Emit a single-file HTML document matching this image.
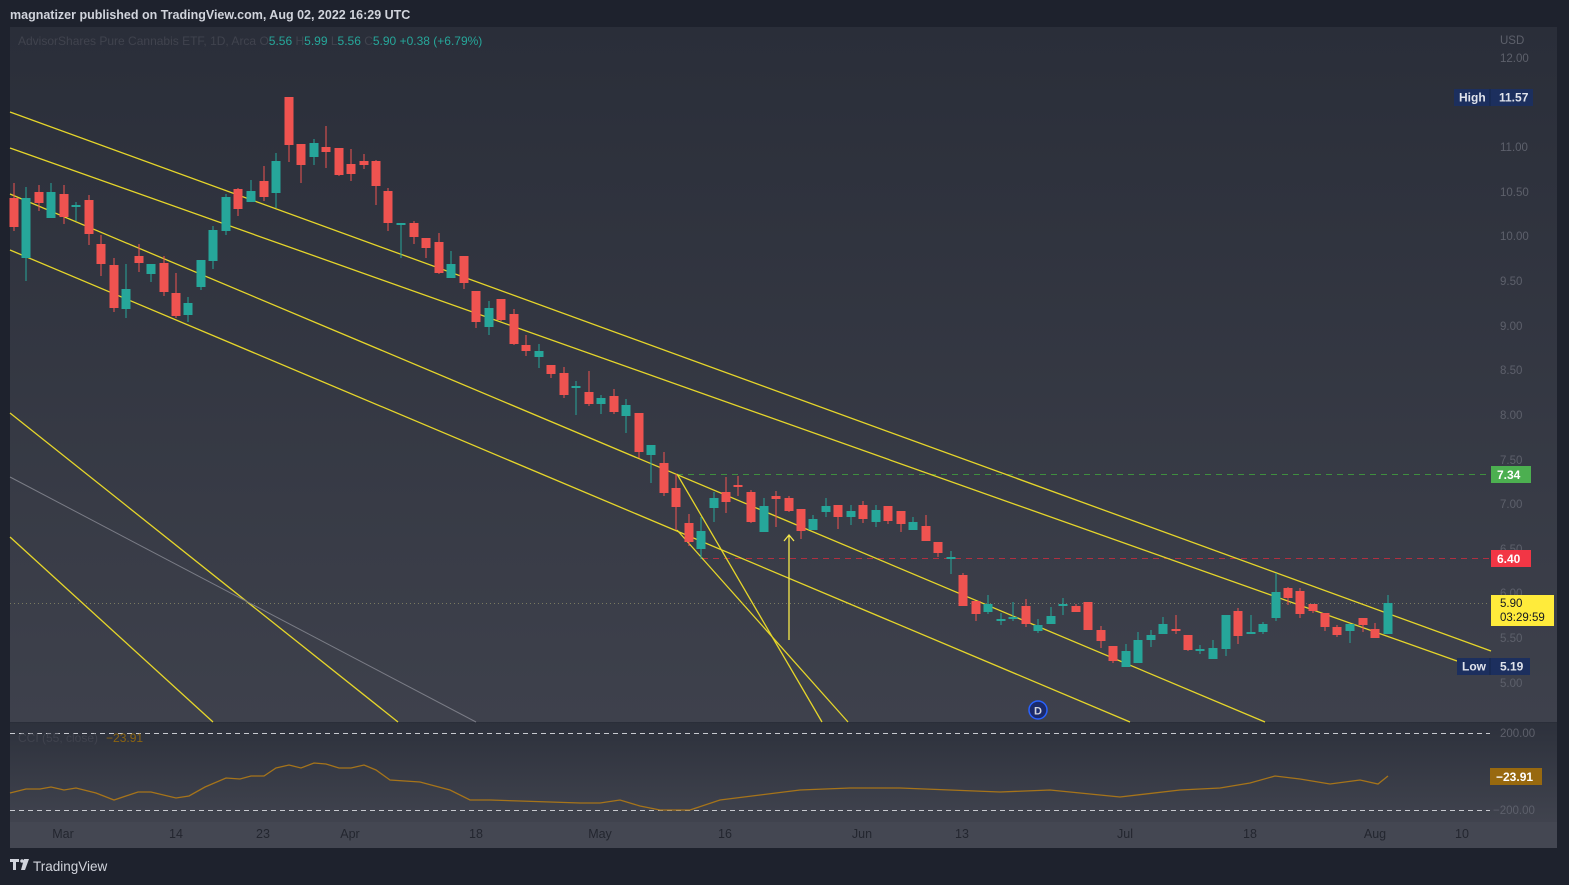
<!DOCTYPE html>
<html><head><meta charset="utf-8"><style>
html,body{margin:0;padding:0;background:#1e222d;width:1569px;height:885px;overflow:hidden}
svg{display:block}
text{font-family:"Liberation Sans",sans-serif}
</style></head><body>
<svg width="1569" height="885" viewBox="0 0 1569 885" xmlns="http://www.w3.org/2000/svg">
<defs>
<linearGradient id="gm" x1="0" y1="0" x2="0" y2="1"><stop offset="0" stop-color="#2a2e39"/><stop offset="1" stop-color="#3e414c"/></linearGradient>
<linearGradient id="gc" x1="0" y1="0" x2="0" y2="1"><stop offset="0" stop-color="#2d313c"/><stop offset="1" stop-color="#40434e"/></linearGradient>
</defs>
<rect width="1569" height="885" fill="#1e222d"/>
<text x="10" y="19" font-size="12.5" font-weight="bold" fill="#d1d4dc">magnatizer published on TradingView.com, Aug 02, 2022 16:29 UTC</text>
<rect x="10" y="27" width="1547" height="695" fill="url(#gm)"/>
<rect x="10" y="722" width="1547" height="100" fill="url(#gc)"/>
<rect x="10" y="822" width="1547" height="26" fill="#444752"/>
<line x1="10" y1="722.5" x2="1557" y2="722.5" stroke="#2a2e39"/>
<text font-size="12" fill="#40434e"><tspan x="18" y="45">AdvisorShares Pure Cannabis ETF, 1D, Arca  O</tspan><tspan fill="#26a69a">5.56</tspan><tspan>  H</tspan><tspan fill="#26a69a">5.99</tspan><tspan>  L</tspan><tspan fill="#26a69a">5.56</tspan><tspan>  C</tspan><tspan fill="#26a69a">5.90  +0.38 (+6.79%)</tspan></text>
<g font-size="11.5" fill="#5d606b">
<text x="1500" y="44">USD</text><text x="1500" y="62">12.00</text><text x="1500" y="151">11.00</text><text x="1500" y="196">10.50</text><text x="1500" y="240">10.00</text><text x="1500" y="285">9.50</text><text x="1500" y="330">9.00</text><text x="1500" y="374">8.50</text><text x="1500" y="419">8.00</text><text x="1500" y="464">7.50</text><text x="1500" y="508">7.00</text><text x="1500" y="553">6.50</text><text x="1500" y="597">6.00</text><text x="1500" y="642">5.50</text><text x="1500" y="687">5.00</text>
<text x="1500" y="737">200.00</text><text x="1493" y="814">−200.00</text>
</g>
<g font-size="12.5" fill="#23262f" text-anchor="middle">
<text x="63" y="838">Mar</text><text x="176" y="838">14</text><text x="263" y="838">23</text><text x="350" y="838">Apr</text><text x="476" y="838">18</text><text x="600" y="838">May</text><text x="725" y="838">16</text><text x="862" y="838">Jun</text><text x="962" y="838">13</text><text x="1125" y="838">Jul</text><text x="1250" y="838">18</text><text x="1375" y="838">Aug</text><text x="1462" y="838">10</text>
</g>
<line x1="677" y1="474.5" x2="1490" y2="474.5" stroke="#3f8e3f" stroke-dasharray="6 5"/>
<line x1="702" y1="558.5" x2="1490" y2="558.5" stroke="#b03040" stroke-dasharray="6 5"/>
<line x1="10" y1="603.5" x2="1490" y2="603.5" stroke="#7a7a60" stroke-dasharray="1 3"/>
<g stroke="#e6d62a" stroke-width="1.3" fill="none">
<line x1="10" y1="112" x2="1491" y2="651"/>
<line x1="10" y1="148" x2="1457" y2="661"/>
<line x1="10" y1="194" x2="1265" y2="722"/>
<line x1="10" y1="250" x2="1130" y2="722"/>
<line x1="10" y1="413" x2="398" y2="722"/>
<line x1="10" y1="537" x2="213" y2="722"/>
<line x1="677" y1="474" x2="822" y2="722"/>
<line x1="677" y1="530" x2="848" y2="722"/>
<path d="M789 640V535M784 541L789 535L794 541" stroke="#f5e84a"/>
</g>
<line x1="10" y1="477" x2="476" y2="722" stroke="#7a7c86" stroke-width="1"/>
<g fill="#ef5350" stroke="#ef5350" stroke-width="1">
<path d="M14 183V231M39 185V211M64 185V224M89 195V245M101 235V276M114 258V312M139 244V272M164 256V296M176 273V318M238 188V216M264 166V201M289 97V162M301 144V183M326 126V168M339 148V176M351 149V181M364 154V169M376 160V205M388 188V231M414 221V244M426 238V258M439 233V274M464 256V289M476 291V328M501 299V321M514 309V345M526 335V356M551 365V378M564 367V398M589 371V406M614 389V414M639 413V458M664 452V496M676 474V530M689 514V546M726 477V513M738 476V496M751 490V523M776 491V527M789 496V512M801 509V539M838 505V529M863 501V523M888 506V524M901 511V532M926 515V541M938 542V557M963 573V606M976 601V621M1026 599V627M1076 604V612M1088 602V630M1101 626V648M1113 646V663M1176 615V634M1188 635V651M1238 608V644M1288 587V605M1300 588V618M1313 604V613M1325 613V631M1337 625V637M1363 618V632M1375 623V638" fill="none"/>
<g stroke="none">
<rect x="9.5" y="198" width="9" height="29"/><rect x="34.5" y="192" width="9" height="11"/><rect x="59.5" y="194" width="9" height="23"/><rect x="84.5" y="200" width="9" height="34"/><rect x="96.5" y="244" width="9" height="20"/><rect x="109.5" y="265" width="9" height="43"/><rect x="134.5" y="256" width="9" height="7"/><rect x="159.5" y="263" width="9" height="29"/><rect x="171.5" y="293" width="9" height="23"/><rect x="233.5" y="189" width="9" height="20"/><rect x="259.5" y="181" width="9" height="16"/><rect x="284.5" y="97" width="9" height="48"/><rect x="296.5" y="144" width="9" height="21"/><rect x="321.5" y="147" width="9" height="5"/><rect x="334.5" y="148" width="9" height="27"/><rect x="346.5" y="164" width="9" height="10"/><rect x="359.5" y="161" width="9" height="4"/><rect x="371.5" y="161" width="9" height="25"/><rect x="383.5" y="191" width="9" height="32"/><rect x="409.5" y="223" width="9" height="14"/><rect x="421.5" y="238" width="9" height="10"/><rect x="434.5" y="242" width="9" height="31"/><rect x="459.5" y="256" width="9" height="27"/><rect x="471.5" y="291" width="9" height="31"/><rect x="496.5" y="299" width="9" height="21"/><rect x="509.5" y="314" width="9" height="30"/><rect x="521.5" y="345" width="9" height="6"/><rect x="546.5" y="365" width="9" height="9"/><rect x="559.5" y="373" width="9" height="22"/><rect x="584.5" y="392" width="9" height="12"/><rect x="609.5" y="396" width="9" height="16"/><rect x="634.5" y="413" width="9" height="39"/><rect x="659.5" y="463" width="9" height="30"/><rect x="671.5" y="488" width="9" height="19"/><rect x="684.5" y="523" width="9" height="19"/><rect x="721.5" y="492" width="9" height="10"/><rect x="733.5" y="485" width="9" height="2"/><rect x="746.5" y="492" width="9" height="30"/><rect x="771.5" y="496" width="9" height="3"/><rect x="784.5" y="498" width="9" height="13"/><rect x="796.5" y="509" width="9" height="22"/><rect x="833.5" y="505" width="9" height="12"/><rect x="858.5" y="505" width="9" height="14"/><rect x="883.5" y="506" width="9" height="15"/><rect x="896.5" y="511" width="9" height="13"/><rect x="921.5" y="526" width="9" height="15"/><rect x="933.5" y="542" width="9" height="11"/><rect x="958.5" y="575" width="9" height="31"/><rect x="971.5" y="601" width="9" height="13"/><rect x="1021.5" y="606" width="9" height="18"/><rect x="1071.5" y="606" width="9" height="6"/><rect x="1083.5" y="602" width="9" height="28"/><rect x="1096.5" y="630" width="9" height="11"/><rect x="1108.5" y="646" width="9" height="15"/><rect x="1171.5" y="629" width="9" height="2"/><rect x="1183.5" y="635" width="9" height="15"/><rect x="1233.5" y="611" width="9" height="25"/><rect x="1283.5" y="588" width="9" height="10"/><rect x="1295.5" y="591" width="9" height="23"/><rect x="1308.5" y="604" width="9" height="7"/><rect x="1320.5" y="613" width="9" height="14"/><rect x="1332.5" y="627" width="9" height="8"/><rect x="1358.5" y="618" width="9" height="7"/><rect x="1370.5" y="629" width="9" height="9"/>
</g></g>
<g fill="#26a69a" stroke="#26a69a" stroke-width="1">
<path d="M26 187V281M51 183V218M76 202V221M126 264V318M151 264V282M188 297V322M201 260V290M213 226V269M226 194V235M251 180V202M276 153V208M314 139V165M401 223V258M451 251V278M489 301V335M539 344V368M576 381V415M601 395V414M626 399V433M651 445V483M701 517V559M714 492V522M764 498V532M813 515V530M826 498V517M851 505V525M876 505V527M913 517V530M951 551V574M988 595V614M1001 613V625M1013 602V621M1038 619V633M1051 607V624M1063 598V615M1126 644V667M1138 632V663M1151 630V647M1163 617V634M1200 645V654M1213 640V659M1226 615V656M1251 615V634M1263 622V634M1276 573V621M1350 624V643M1388 595V634" fill="none"/>
<g stroke="none">
<rect x="21.5" y="198" width="9" height="60"/><rect x="46.5" y="192" width="9" height="26"/><rect x="71.5" y="205" width="9" height="2"/><rect x="121.5" y="289" width="9" height="20"/><rect x="146.5" y="264" width="9" height="10"/><rect x="183.5" y="303" width="9" height="12"/><rect x="196.5" y="260" width="9" height="27"/><rect x="208.5" y="230" width="9" height="31"/><rect x="221.5" y="197" width="9" height="34"/><rect x="246.5" y="191" width="9" height="11"/><rect x="271.5" y="161" width="9" height="32"/><rect x="309.5" y="143" width="9" height="14"/><rect x="396.5" y="223" width="9" height="2"/><rect x="446.5" y="264" width="9" height="14"/><rect x="484.5" y="308" width="9" height="19"/><rect x="534.5" y="351" width="9" height="6"/><rect x="571.5" y="386" width="9" height="2"/><rect x="596.5" y="398" width="9" height="6"/><rect x="621.5" y="405" width="9" height="11"/><rect x="646.5" y="445" width="9" height="10"/><rect x="696.5" y="531" width="9" height="18"/><rect x="709.5" y="498" width="9" height="10"/><rect x="759.5" y="506" width="9" height="26"/><rect x="808.5" y="519" width="9" height="11"/><rect x="821.5" y="506" width="9" height="6"/><rect x="846.5" y="511" width="9" height="6"/><rect x="871.5" y="510" width="9" height="12"/><rect x="908.5" y="522" width="9" height="8"/><rect x="946.5" y="557" width="9" height="2"/><rect x="983.5" y="604" width="9" height="8"/><rect x="996.5" y="619" width="9" height="2"/><rect x="1008.5" y="617" width="9" height="2"/><rect x="1033.5" y="625" width="9" height="6"/><rect x="1046.5" y="616" width="9" height="8"/><rect x="1058.5" y="604" width="9" height="2"/><rect x="1121.5" y="651" width="9" height="16"/><rect x="1133.5" y="640" width="9" height="23"/><rect x="1146.5" y="635" width="9" height="5"/><rect x="1158.5" y="624" width="9" height="10"/><rect x="1195.5" y="649" width="9" height="2"/><rect x="1208.5" y="648" width="9" height="11"/><rect x="1221.5" y="615" width="9" height="34"/><rect x="1246.5" y="632" width="9" height="2"/><rect x="1258.5" y="624" width="9" height="8"/><rect x="1271.5" y="592" width="9" height="26"/><rect x="1345.5" y="624" width="9" height="7"/><rect x="1383.5" y="603" width="9" height="31"/>
</g></g>
<circle cx="1038" cy="710" r="9" fill="#1b2a6b" stroke="#2962ff" stroke-width="1.5"/>
<text x="1038" y="714.5" font-size="11" font-weight="bold" fill="#d1d4dc" text-anchor="middle">D</text>
<rect x="1454" y="89" width="79" height="17" fill="#1c2f5e"/><line x1="1490" y1="89" x2="1490" y2="106" stroke="#152448"/>
<text x="1459" y="101.5" font-size="12" font-weight="bold" fill="#e0e3eb">High</text><text x="1499" y="101.5" font-size="12" font-weight="bold" fill="#e0e3eb">11.57</text>
<rect x="1457" y="658" width="73" height="17" fill="#1c2f5e"/><line x1="1490" y1="658" x2="1490" y2="675" stroke="#152448"/>
<text x="1462" y="670.5" font-size="12" font-weight="bold" fill="#e0e3eb">Low</text><text x="1500" y="670.5" font-size="12" font-weight="bold" fill="#e0e3eb">5.19</text>
<rect x="1491" y="466" width="40" height="17" fill="#4caf50"/><text x="1497" y="479" font-size="12" font-weight="bold" fill="#fff">7.34</text>
<rect x="1491" y="550" width="40" height="17" fill="#f23645"/><text x="1497" y="563" font-size="12" font-weight="bold" fill="#fff">6.40</text>
<rect x="1491" y="595" width="63" height="31" fill="#ffeb3b"/><text x="1500" y="607" font-size="11.5" fill="#131722">5.90</text><text x="1500" y="621" font-size="11.5" fill="#131722">03:29:59</text>
<line x1="10" y1="733.5" x2="1490" y2="733.5" stroke="#c8cad0" stroke-dasharray="5 4"/>
<line x1="10" y1="810.5" x2="1490" y2="810.5" stroke="#c8cad0" stroke-dasharray="5 4"/>
<text font-size="12" fill="#40434e"><tspan x="18" y="742">CCI (55, close)</tspan><tspan fill="#8c6410" dx="8">−23.91</tspan></text>
<polyline fill="none" stroke="#a6741a" stroke-width="1.3" points="10,793 26,789 40,789 51,787 64,790 76,788 96,793 114,800 138,792 151,792 176,798 189,796 205,787 226,778 240,779 251,776 264,776 276,768 289,765 301,768 314,763 326,764 339,768 351,768 364,765 376,770 390,780 420,782 450,790 470,800 490,800 520,801 550,802 580,803 600,803 620,800 640,806 660,810 690,810 720,800 760,795 800,790 850,788 900,788 950,790 1000,792 1050,790 1100,795 1120,797 1180,790 1220,788 1250,783 1275,776 1300,779 1330,784 1360,780 1378,784 1388,776"/>
<rect x="1490" y="768" width="52" height="17" fill="#98690f"/><text x="1496" y="781" font-size="12" font-weight="bold" fill="#fff">−23.91</text>
<g fill="#d1d4dc"><path d="M10 859h9v3h-3v8h-3v-8h-3z"/><circle cx="22" cy="861" r="1.8"/><path d="M24 859h5l-4 11h-4z"/></g>
<text x="33" y="871" font-size="13.5" fill="#d1d4dc">TradingView</text>
</svg>
</body></html>
